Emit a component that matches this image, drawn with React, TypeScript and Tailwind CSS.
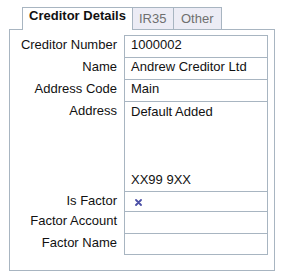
import React from "react";

const B = "border-[#a8b5c1]";

function Row({
  label,
  h,
  last,
  children,
}: {
  label: string;
  h: string;
  last?: boolean;
  children?: React.ReactNode;
}) {
  return (
    <div className={`flex ${h}`}>
      <div className="w-[114px] shrink-0 pr-[7px] pt-[2px] text-right leading-[16px]">{label}</div>
      <div
        className={`w-[144px] shrink-0 border-x border-t ${B} ${last ? "border-b" : ""} pl-[6px] pt-[1px] leading-[16px]`}
      >
        {children}
      </div>
    </div>
  );
}

export default function App() {
  return (
    <div
      className="w-[290px] h-[277px] bg-white text-[13px] text-[#111]"
      style={{ fontFamily: '"Liberation Sans", Arial, sans-serif' }}
    >
      <div className="h-[7px]" />
      {/* Tabs */}
      <div className="flex items-start h-[22px] pl-[22px]">
        <div
          className={`relative z-10 h-[23px] w-[111px] border-l border-t border-r ${B} bg-white text-center font-bold leading-[16px] text-[#111]`}
        >
          Creditor Details
        </div>
        <div
          className={`h-[22px] w-[41px] border-t border-r ${B} bg-[#ececf5] pl-[6px] pt-[3px] leading-[16px] text-[#6f6f6f]`}
        >
          IR35
        </div>
        <div
          className={`h-[22px] w-[48px] border-t border-r ${B} bg-[#ececf5] pl-[7px] pt-[3px] leading-[16px] text-[#6f6f6f]`}
        >
          Other
        </div>
      </div>
      {/* Panel */}
      <div className={`ml-[9px] w-[266px] h-[242px] border ${B} pt-[5px]`}>
        <Row label="Creditor Number" h="h-[22px]">1000002</Row>
        <Row label="Name" h="h-[22px]">Andrew Creditor Ltd</Row>
        <Row label="Address Code" h="h-[22px]">Main</Row>
        <div className="flex h-[90px]">
          <div className="w-[114px] shrink-0 pr-[7px] pt-[2px] text-right leading-[16px]">Address</div>
          <div className={`w-[144px] shrink-0 border-x border-t ${B} pl-[6px] pt-[1px] flex flex-col`}>
            <div className="leading-[17px]">Default Added</div>
            <div className="h-[17px]" />
            <div className="h-[17px]" />
            <div className="h-[17px]" />
            <div className="leading-[17px]">XX99 9XX</div>
          </div>
        </div>
        <Row label="Is Factor" h="h-[20px]">
          <div className="pl-[4px] pt-[6px]">
            <svg width="7" height="7" viewBox="0 0 7 7" className="block">
              <path d="M1 1 L6 6 M6 1 L1 6" stroke="#4b50a6" strokeWidth="1.8" strokeLinecap="round" />
            </svg>
          </div>
        </Row>
        <Row label="Factor Account" h="h-[22px]" />
        <Row label="Factor Name" h="h-[22px]" last />
      </div>
    </div>
  );
}
